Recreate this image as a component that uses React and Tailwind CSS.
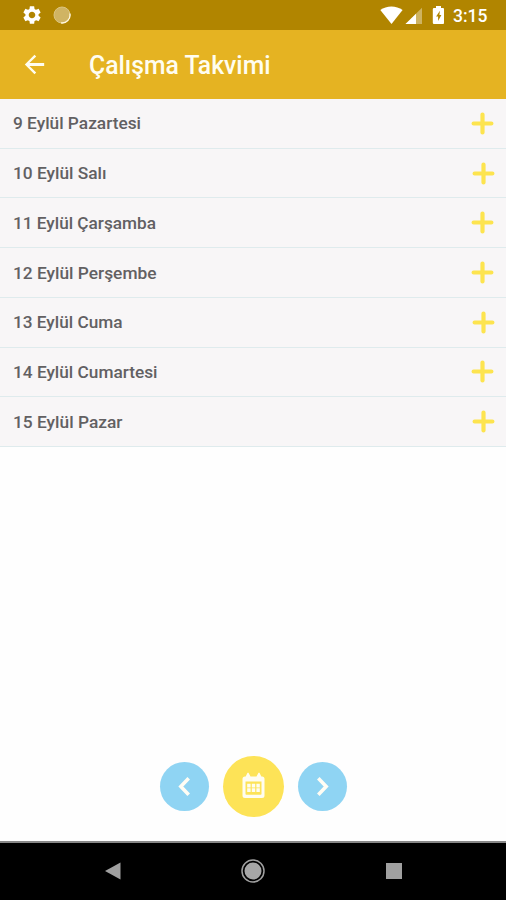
const days = [
  { label: '9 Eylül Pazartesi', width: 128, pad: 'pr-[12px]' },
  { label: '10 Eylül Salı', width: 93.5, pad: 'pr-[11px]' },
  { label: '11 Eylül Çarşamba', width: 143, pad: 'pr-[12px]' },
  { label: '12 Eylül Perşembe', width: 143.5, pad: 'pr-[12px]' },
  { label: '13 Eylül Cuma', width: 109.5, pad: 'pr-[11px]' },
  { label: '14 Eylül Cumartesi', width: 144.5, pad: 'pr-[12px]' },
  { label: '15 Eylül Pazar', width: 109.5, pad: 'pr-[11px]' },
];

function StatusBar() {
  return (
    <div className="flex h-[30px] shrink-0 items-center bg-[#b18500] pr-[19px] pl-[21px] text-white">
      <svg width="22" height="22" viewBox="0 0 24 24" fill="currentColor">
        <path d="M19.14 12.94c.04-.3.06-.61.06-.94 0-.32-.02-.64-.07-.94l2.03-1.58c.18-.14.23-.41.12-.61l-1.92-3.32c-.12-.22-.37-.29-.59-.22l-2.39.96c-.5-.38-1.03-.7-1.62-.94l-.36-2.54c-.04-.24-.24-.41-.48-.41h-3.84c-.24 0-.43.17-.47.41l-.36 2.54c-.59.24-1.13.57-1.62.94l-2.39-.96c-.22-.08-.47 0-.59.22L2.74 8.87c-.12.21-.08.47.12.61l2.03 1.58c-.05.3-.09.63-.09.94s.02.64.07.94l-2.03 1.58c-.18.14-.23.41-.12.61l1.92 3.32c.12.22.37.29.59.22l2.39-.96c.5.38 1.03.7 1.62.94l.36 2.54c.05.24.24.41.48.41h3.84c.24 0 .44-.17.47-.41l.36-2.54c.59-.24 1.13-.56 1.62-.94l2.39.96c.22.08.47 0 .59-.22l1.92-3.32c.12-.22.07-.47-.12-.61l-2.01-1.58zM12 15.6c-1.98 0-3.6-1.62-3.6-3.6s1.62-3.6 3.6-3.6 3.6 1.62 3.6 3.6-1.62 3.6-3.6 3.6z" />
      </svg>
      <svg className="ml-[10px]" width="18" height="18" viewBox="0 0 18 18">
        <circle cx="9" cy="9" r="8" fill="#d0b463" stroke="#dbc57f" />
        <path d="M16.9 7.5A8 8 0 0 1 8 16.9" fill="none" stroke="#fff7df" strokeWidth="1.3" />
      </svg>
      <svg className="ml-auto" width="64" height="20" viewBox="0 0 64 20" fill="currentColor">
        <path d="M.3 5.1C6.5.2 16.3.2 22.6 5.1L11.5 19Z" />
        <path d="M42 2.8V19H25.5Z" opacity=".38" />
        <path d="M36 8.7V19H25.5Z" />
        <path fillRule="evenodd" d="M56 1h5v2h2a1.2 1.2 0 0 1 1.2 1.2v13.6A1.2 1.2 0 0 1 63 19h-9a1.2 1.2 0 0 1-1.2-1.2V4.2A1.2 1.2 0 0 1 54 3h2ZM59.9 5.7l-3.8 5.8h2v4.4l3.3-6h-2Z" />
      </svg>
      <svg className="ml-[9px] overflow-visible" width="34" height="20">
        <text x="0" y="17" textLength="34.5" lengthAdjust="spacingAndGlyphs" fill="currentColor" fontSize="18" fontWeight="500">
          3:15
        </text>
      </svg>
    </div>
  );
}

function DayLabel({ label, width }) {
  return (
    <svg width={width} height="24" className="block overflow-visible">
      <text x="0" y="17.7" textLength={width} lengthAdjust="spacingAndGlyphs" fill="#626062" fontSize="17" fontWeight="500">
        {label}
      </text>
    </svg>
  );
}

function Plus() {
  return (
    <svg width="23" height="23" viewBox="0 0 23 23" stroke="#fde44f" strokeWidth="4.2" strokeLinecap="round">
      <path d="M11.5 2.6V20.4M2.6 11.5H20.4" />
    </svg>
  );
}

function RoundButton({ path }) {
  return (
    <button className="flex size-[49px] items-center justify-center rounded-full bg-[#8fd4f3]">
      <svg width="21" height="21" viewBox="0 0 20 20" fill="none" stroke="#fffdf4" strokeWidth="3.4">
        <path d={path} />
      </svg>
    </button>
  );
}

export default function App() {
  return (
    <div className="flex h-[900px] w-[506px] flex-col overflow-hidden bg-[#fefefe] font-[Roboto,sans-serif]">
      <StatusBar />
      <header className="flex h-[69px] shrink-0 items-center bg-[#e5b322] pl-[20px] text-[#fffdf0]">
        <svg width="29" height="29" viewBox="0 0 24 24" fill="currentColor" className="-mt-[1px]">
          <path d="M20 10.8H7.83l5.59-5.39L12 4l-8 8 8 8 1.41-1.41L7.83 13.2H20z" />
        </svg>
        <h1 className="mt-[3px] ml-[40px]">
          <svg width="182" height="30" className="block overflow-visible">
            <text x="0" y="23" textLength="181.5" lengthAdjust="spacingAndGlyphs" fill="currentColor" fontSize="25" fontWeight="500">
              Çalışma Takvimi
            </text>
          </svg>
        </h1>
      </header>
      <ul className="flex h-[348px] shrink-0 flex-col">
        {days.map((day) => (
          <li
            key={day.label}
            className={`flex flex-1 items-center justify-between border-b border-[#dfebed] bg-[#f8f6f7] pl-[13px] ${day.pad}`}
          >
            <DayLabel label={day.label} width={day.width} />
            <Plus />
          </li>
        ))}
      </ul>
      <div className="flex flex-1 items-end justify-center gap-[14px] pb-[24.5px] pl-px">
        <div className="pb-[6px]">
          <RoundButton path="M14 2.2 6.5 10l7.5 7.8" />
        </div>
        <button className="flex size-[61px] items-center justify-center rounded-full bg-[#fde357]">
          <svg width="24" height="28" viewBox="0.5 0.5 24 28" fill="#fffdf0">
            <path fillRule="evenodd" d="M3.5 5H4.2L6 1.2h1L9 5h6l2-3.8h1L19.8 5h.7A2.5 2.5 0 0 1 23 7.5V24a2.5 2.5 0 0 1-2.5 2.5h-17A2.5 2.5 0 0 1 1 24V7.5A2.5 2.5 0 0 1 3.5 5ZM4 10v12.5q0 .8.8.8h14.4q.8 0 .8-.8V10Z" />
            <path d="M5.7 12.3h3.4v3.6H5.7Zm4.6 0h3.4v3.6h-3.4Zm4.6 0h3.4v3.6h-3.4ZM5.7 16.8h3.4v3.6H5.7Zm4.6 0h3.4v3.6h-3.4Zm4.6 0h3.4v3.6h-3.4Z" />
          </svg>
        </button>
        <div className="pb-[6px]">
          <RoundButton path="M6 2.2 13.5 10 6 17.8" />
        </div>
      </div>
      <nav className="flex h-[59px] shrink-0 items-center justify-between border-t-2 border-[#888] bg-black pr-[104.5px] pb-[2px] pl-[105px]">
        <svg width="16" height="18" viewBox="0 0 16 18" fill="#a0a0a0">
          <path d="M0 9 15.5 .5v17Z" />
        </svg>
        <svg width="24" height="24" viewBox="0 0 24 24">
          <circle cx="12" cy="12" r="8.5" fill="#a6a6a6" />
          <circle cx="12" cy="12" r="11" fill="none" stroke="#a0a0a0" strokeWidth="1.5" />
        </svg>
        <div className="size-[16px] bg-[#a0a0a0]" />
      </nav>
    </div>
  );
}
